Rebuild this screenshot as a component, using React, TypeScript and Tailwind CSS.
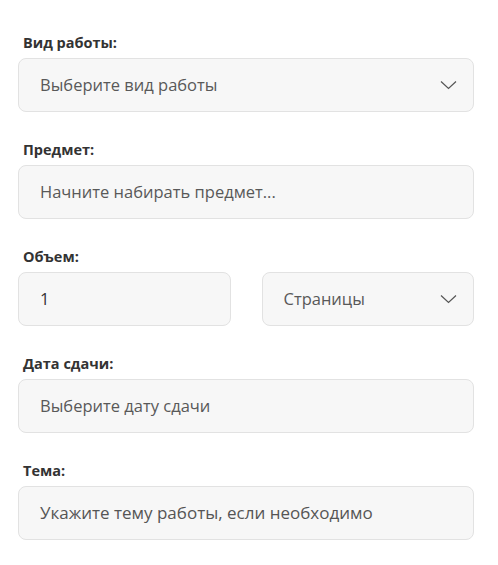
function Label({ children }: { children: React.ReactNode }) {
  return <div className="pl-[5px] text-[14.5px] font-bold leading-[18px] text-[#333]">{children}</div>
}

function Chevron() {
  return (
    <svg width="17" height="10" viewBox="0 0 17 10" fill="none" className="text-[#555]">
      <path d="M1 1.5 L8.5 8.5 L16 1.5" stroke="currentColor" strokeWidth="1.2" />
    </svg>
  )
}

const box =
  "h-[54px] rounded-[8px] border border-[#e2e2e2] bg-[#f7f7f7] flex items-center pl-[21px] pr-[16px] text-[16.5px] text-[#595959]"

export default function App() {
  return (
    <div className="w-[498px] h-[565px] bg-white pl-[18px] pr-[24px] pt-[34px] font-['Open_Sans',sans-serif] flex flex-col">
      <Label>Вид работы:</Label>
      <div className={box + " mt-[6px] justify-between"}>
        <span>Выберите вид работы</span>
        <Chevron />
      </div>

      <div className="mt-[29px]">
        <Label>Предмет:</Label>
      </div>
      <div className={box + " mt-[6px]"}>
        <span>Начните набирать предмет...</span>
      </div>

      <div className="mt-[29px]">
        <Label>Объем:</Label>
      </div>
      <div className="mt-[6px] grid grid-cols-2 gap-[31px]">
        <div className={box}>
          <span className="text-[#333]">1</span>
        </div>
        <div className={box + " justify-between"}>
          <span>Страницы</span>
          <Chevron />
        </div>
      </div>

      <div className="mt-[29px]">
        <Label>Дата сдачи:</Label>
      </div>
      <div className={box + " mt-[6px]"}>
        <span>Выберите дату сдачи</span>
      </div>

      <div className="mt-[29px]">
        <Label>Тема:</Label>
      </div>
      <div className={box + " mt-[6px]"}>
        <span className="text-[17px] text-[#555]">Укажите тему работы, если необходимо</span>
      </div>
    </div>
  )
}
